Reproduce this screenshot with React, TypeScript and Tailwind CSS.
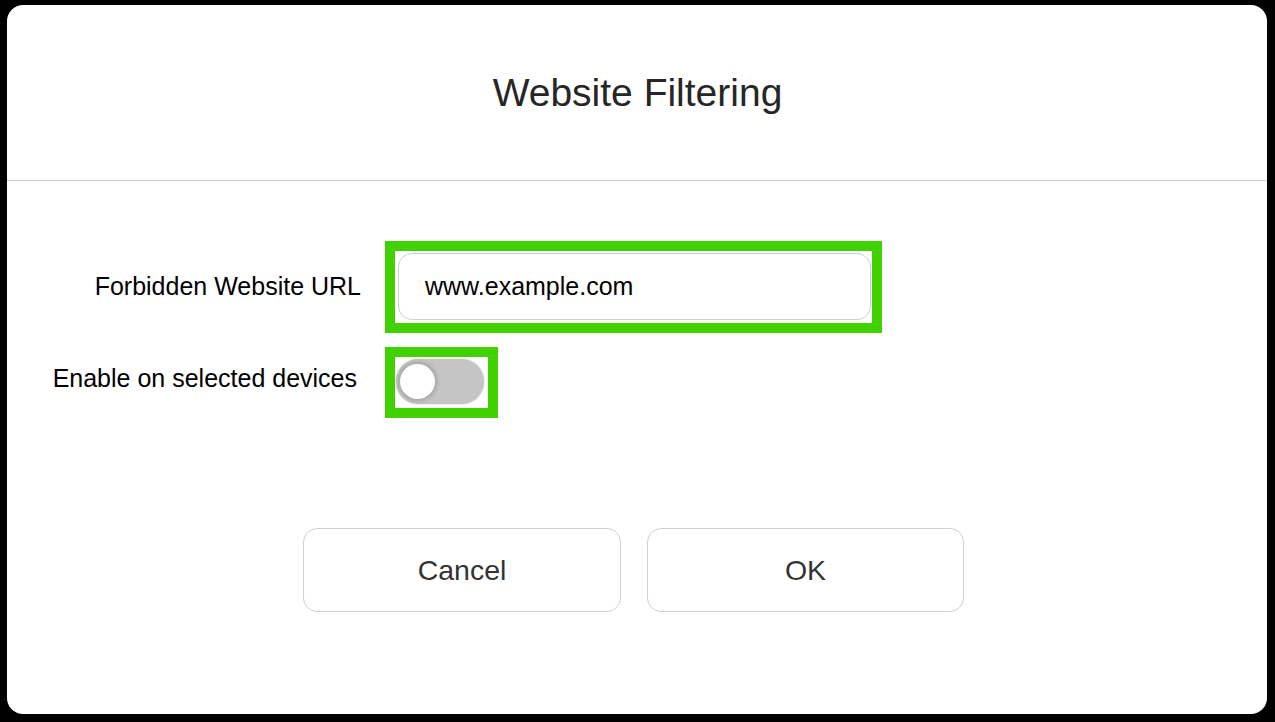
import React from "react";

export default function App() {
  return (
    <div
      className="w-[1275px] h-[722px] bg-black pl-[7px] pt-[5px]"
      style={{ fontFamily: '"Liberation Sans", Arial, sans-serif' }}
    >
      <div className="w-[1260px] h-[709px] bg-white rounded-[16px] flex flex-col overflow-hidden">
        <div className="h-[176px] shrink-0 flex items-center justify-center border-b border-[#cccccc]">
          <h1 className="text-[39px] leading-none text-[#262626] pl-[1px]">Website Filtering</h1>
        </div>

        <div className="pt-[60px] flex flex-col">
          <div className="flex items-center">
            <div className="w-[378px] pr-[24px] text-right text-[25px] leading-none text-black mb-[2px]">
              Forbidden Website URL
            </div>
            <div className="w-[497px] h-[92px] border-[10px] border-[#41d100] pl-[3px] pt-[2px]">
              <div className="w-[473px] h-[67px] rounded-[14px] border border-[#cfcfcf] flex items-center pl-[26px] text-[25px] text-black">
                www.example.com
              </div>
            </div>
          </div>

          <div className="flex items-center mt-[14px]">
            <div className="w-[378px] pr-[28px] text-right text-[25px] leading-none text-black mb-[8px]">
              Enable on selected devices
            </div>
            <div className="w-[113px] h-[71px] border-[10px] border-[#41d100] pl-[1px] pt-[2px]">
              <div className="w-[88px] h-[45px] rounded-full bg-[#c4c5c4] shadow-[0_0_2px_rgba(0,0,0,0.25)] flex items-center pl-[4px]">
                <div className="w-[35px] h-[35px] rounded-full bg-white shadow-[0_0_4px_2px_rgba(0,0,0,0.18)]" />
              </div>
            </div>
          </div>
        </div>

        <div className="mt-[110px] flex justify-center gap-[26px] pr-[7px]">
          <button className="w-[318px] h-[84px] rounded-[14px] border border-[#d0d0d0] bg-white text-[28.5px] text-[#333333]">
            Cancel
          </button>
          <button className="w-[317px] h-[84px] rounded-[14px] border border-[#d0d0d0] bg-white text-[28.5px] text-[#333333]">
            OK
          </button>
        </div>
      </div>
    </div>
  );
}
